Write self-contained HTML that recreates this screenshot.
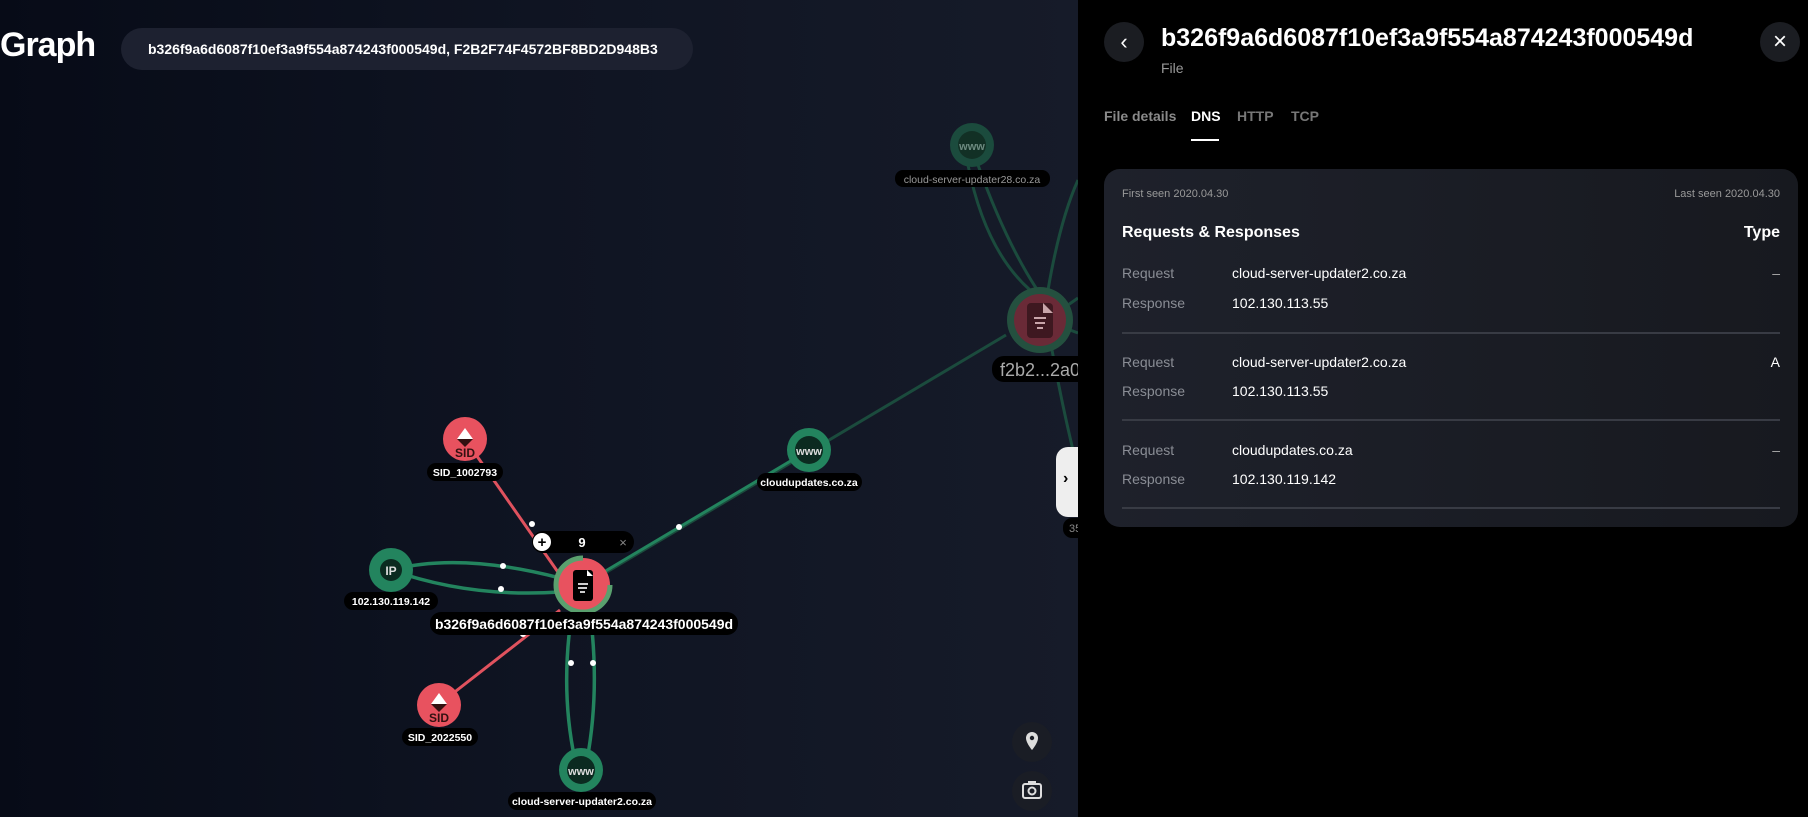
<!DOCTYPE html>
<html><head><meta charset="utf-8"><style>
*{margin:0;padding:0;box-sizing:border-box}
body{width:1808px;height:817px;overflow:hidden;font-family:"Liberation Sans",sans-serif;background:#000;position:relative}
#g{position:absolute;left:0;top:0;width:1078px;height:817px;background:linear-gradient(90deg,#070b17 0%,#0f1422 50%,#161b29 100%)}
.t{position:absolute;color:#fff}
#panel{position:absolute;left:1078px;top:0;width:730px;height:817px;background:#000}
.circ{position:absolute;width:40px;height:40px;border-radius:50%;background:#1b1d22;color:#fff;display:flex;align-items:center;justify-content:center}
.card{position:absolute;left:26px;top:169px;width:694px;height:358px;border-radius:16px;background:linear-gradient(90deg,#1e212b,#17191f)}
.row{position:absolute;font-size:14px}
.lab{position:absolute;left:18px;color:#8a8d95}
.val{position:absolute;left:128px;color:#fff}
.typ{position:absolute;right:18px;color:#aaa}
.div{position:absolute;left:18px;right:18px;height:2px;background:#383b44}
</style></head><body>
<div id="g">
<svg width="1078" height="817" style="position:absolute;left:0;top:0" font-family="Liberation Sans, sans-serif">
<g stroke="#1b4b3d" stroke-width="3" fill="none">
<path d="M978 165 Q1005 240 1036 288"/>
<path d="M968 165 Q985 250 1030 290"/>
<path d="M1048 290 Q1060 220 1078 180"/>
<path d="M1068 305 L1078 298"/>
<path d="M1070 330 L1078 333"/>
<path d="M1052 350 Q1065 420 1078 470"/>
<path d="M1006 335 L590 582"/>
</g>
<path d="M582 585 L809 450" stroke="#23845e" stroke-width="3"/>
<path d="M465 439 L560 575" stroke="#e0525e" stroke-width="3"/>
<path d="M438 705 L560 610" stroke="#e0525e" stroke-width="3"/>
<g stroke="#23845e" stroke-width="3.5" fill="none">
<path d="M391 570 Q460 552 560 578"/>
<path d="M391 570 Q470 598 560 592"/>
<path d="M572 612 Q560 690 575 760"/>
<path d="M590 612 Q600 690 587 760"/>
</g>
<g fill="#fff"><circle cx="532" cy="524" r="3"/><circle cx="503" cy="566" r="3"/><circle cx="501" cy="589" r="3"/><circle cx="679" cy="527" r="3"/><circle cx="571" cy="663" r="3"/><circle cx="593" cy="663" r="3"/><circle cx="523" cy="634" r="3"/></g>
<circle cx="972" cy="145" r="22" fill="#1b4b3d"/><circle cx="972" cy="145" r="14" fill="#123025"/>
<text x="972" y="150" fill="#6d8a80" font-size="11" font-weight="bold" text-anchor="middle">www</text>
<rect x="895" y="170" width="155" height="17" rx="8" fill="#000"/>
<text x="972" y="183" fill="#999" font-size="10.5" text-anchor="middle">cloud-server-updater28.co.za</text>
<circle cx="1040" cy="320" r="33" fill="#24503f"/><circle cx="1040" cy="320" r="26" fill="#6a2a37"/>
<rect x="1027" y="303" width="26" height="35" rx="4" fill="#3e1820"/><path d="M1043 303 L1053 313 L1043 313Z" fill="#c9a5aa"/>
<g stroke="#c9a5aa" stroke-width="2"><line x1="1034" y1="318" x2="1046" y2="318"/><line x1="1035" y1="323" x2="1045" y2="323"/><line x1="1037" y1="328" x2="1043" y2="328"/></g>
<rect x="992" y="356" width="100" height="26" rx="12" fill="#000"/>
<text x="1000" y="376" fill="#aaa" font-size="18">f2b2...2a0f</text>
<rect x="1063" y="518" width="30" height="20" rx="9" fill="#000"/><text x="1069" y="532" fill="#888" font-size="11">35</text>
<circle cx="809" cy="450" r="22" fill="#23845e"/><circle cx="809" cy="450" r="14" fill="#0b2a20"/>
<text x="809" y="455" fill="#ddd" font-size="11" font-weight="bold" text-anchor="middle">www</text>
<rect x="757" y="473" width="105" height="18" rx="9" fill="#000"/>
<text x="809" y="486" fill="#fff" font-size="10.5" font-weight="bold" text-anchor="middle">cloudupdates.co.za</text>
<circle cx="465" cy="439" r="22" fill="#e8525f"/>
<path d="M465 428 L473 439 L457 439Z" fill="#fff"/><path d="M457 439 L473 439 L465 447Z" fill="#311"/>
<text x="465" y="457" fill="#311" font-size="12" font-weight="bold" text-anchor="middle">SID</text>
<rect x="427" y="463" width="76" height="18" rx="9" fill="#000"/>
<text x="465" y="476" fill="#fff" font-size="10.5" font-weight="bold" text-anchor="middle">SID_1002793</text>
<circle cx="391" cy="570" r="22" fill="#23845e"/><circle cx="391" cy="570" r="11" fill="#0b2a20"/>
<text x="391" y="575" fill="#ddd" font-size="12" font-weight="bold" text-anchor="middle">IP</text>
<rect x="344" y="592" width="94" height="18" rx="9" fill="#000"/>
<text x="391" y="605" fill="#fff" font-size="10.5" font-weight="bold" text-anchor="middle">102.130.119.142</text>
<circle cx="583" cy="585" r="27" fill="#e8525f"/>
<path d="M583 558 A27 27 0 0 1 610 585 A27 27 0 1 1 556 585" fill="none" stroke="#5aa06e" stroke-width="5" transform="rotate(90 583 585)"/>
<circle cx="583" cy="585" r="22" fill="#e8525f"/>
<rect x="573" y="570" width="20" height="31" rx="3" fill="#000"/><path d="M587 570 L593 576 L587 576Z" fill="#fff"/>
<g stroke="#fff" stroke-width="1.6"><line x1="578" y1="584" x2="588" y2="584"/><line x1="578" y1="588" x2="587" y2="588"/><line x1="580" y1="592" x2="585" y2="592"/></g>
<rect x="430" y="612" width="308" height="23" rx="11" fill="#000"/>
<text x="584" y="629" fill="#fff" font-size="14" font-weight="bold" text-anchor="middle">b326f9a6d6087f10ef3a9f554a874243f000549d</text>
<rect x="532" y="531" width="102" height="22" rx="11" fill="#000"/>
<circle cx="542" cy="542" r="9" fill="#fff"/><text x="542" y="547" font-size="15" font-weight="bold" text-anchor="middle" fill="#000">+</text>
<text x="582" y="547" fill="#fff" font-size="13" font-weight="bold" text-anchor="middle">9</text>
<text x="623" y="547" fill="#888" font-size="13" text-anchor="middle">×</text>
<circle cx="439" cy="705" r="22" fill="#e8525f"/>
<path d="M439 693 L447 704 L431 704Z" fill="#fff"/><path d="M431 704 L447 704 L439 712Z" fill="#311"/>
<text x="439" y="722" fill="#311" font-size="12" font-weight="bold" text-anchor="middle">SID</text>
<rect x="402" y="728" width="76" height="18" rx="9" fill="#000"/>
<text x="440" y="741" fill="#fff" font-size="10.5" font-weight="bold" text-anchor="middle">SID_2022550</text>
<circle cx="581" cy="770" r="22" fill="#23845e"/><circle cx="581" cy="770" r="14" fill="#0b2a20"/>
<text x="581" y="775" fill="#ddd" font-size="11" font-weight="bold" text-anchor="middle">www</text>
<rect x="508" y="792" width="148" height="18" rx="9" fill="#000"/>
<text x="582" y="805" fill="#fff" font-size="10.5" font-weight="bold" text-anchor="middle">cloud-server-updater2.co.za</text>
<circle cx="1032" cy="742" r="20" fill="#1a1d25"/>
<path d="M1032 732 a6 6 0 0 1 6 6 c0 5 -6 12 -6 12 c0 0 -6 -7 -6 -12 a6 6 0 0 1 6 -6z" fill="#ddd"/><circle cx="1032" cy="738" r="2.2" fill="#1a1d25"/>
<circle cx="1032" cy="791" r="20" fill="#1a1d25"/>
<rect x="1023" y="784" width="18" height="14" rx="2" fill="none" stroke="#ddd" stroke-width="2"/><rect x="1028" y="781" width="8" height="4" fill="#ddd"/><circle cx="1032" cy="791" r="3.5" fill="none" stroke="#ddd" stroke-width="2"/>
</svg>
<div class="t" style="left:0;top:26px;font-size:34px;font-weight:bold;letter-spacing:-1px">Graph</div>
<div style="position:absolute;left:121px;top:28px;width:572px;height:42px;border-radius:21px;background:#1d2130"></div>
<div class="t" style="left:148px;top:41px;font-size:14px;font-weight:bold">b326f9a6d6087f10ef3a9f554a874243f000549d, F2B2F74F4572BF8BD2D948B3</div>
<div style="position:absolute;left:1056px;top:447px;width:30px;height:70px;border-radius:12px 0 0 12px;background:#eee;"></div>
<div style="position:absolute;left:1063px;top:470px;font-size:16px;color:#000;font-weight:bold">›</div>
</div>
<div id="panel">
<div class="circ" style="left:26px;top:22px;font-size:22px">‹</div>
<div class="t" style="left:83px;top:24px;font-size:25px;font-weight:bold">b326f9a6d6087f10ef3a9f554a874243f000549d</div>
<div class="t" style="left:83px;top:60px;font-size:14px;color:#999">File</div>
<div class="circ" style="left:682px;top:22px;font-size:24px">×</div>
<div style="position:absolute;left:26px;top:108px;font-size:14px;font-weight:bold;color:#8a8a8a">File details</div>
<div style="position:absolute;left:113px;top:108px;font-size:14px;font-weight:bold;color:#fff">DNS</div>
<div style="position:absolute;left:113px;top:139px;width:28px;height:2px;background:#fff"></div>
<div style="position:absolute;left:159px;top:108px;font-size:14px;font-weight:bold;color:#777">HTTP</div>
<div style="position:absolute;left:213px;top:108px;font-size:14px;font-weight:bold;color:#777">TCP</div>
<div class="card">
<div style="position:absolute;left:18px;top:19px;font-size:11px;color:#999">First seen 2020.04.30</div>
<div style="position:absolute;right:18px;top:19px;font-size:11px;color:#999">Last seen 2020.04.30</div>
<div style="position:absolute;left:18px;top:55px;font-size:16px;font-weight:bold;color:#fff">Requests &amp; Responses</div>
<div style="position:absolute;right:18px;top:55px;font-size:16px;font-weight:bold;color:#fff">Type</div>
<div class="row" style="top:96px;width:100%"><span class="lab">Request</span><span class="val">cloud-server-updater2.co.za</span><span class="typ">–</span></div>
<div class="row" style="top:126px;width:100%"><span class="lab">Response</span><span class="val">102.130.113.55</span></div>
<div class="div" style="top:163px"></div>
<div class="row" style="top:185px;width:100%"><span class="lab">Request</span><span class="val">cloud-server-updater2.co.za</span><span class="typ" style="color:#fff">A</span></div>
<div class="row" style="top:214px;width:100%"><span class="lab">Response</span><span class="val">102.130.113.55</span></div>
<div class="div" style="top:250px"></div>
<div class="row" style="top:273px;width:100%"><span class="lab">Request</span><span class="val">cloudupdates.co.za</span><span class="typ">–</span></div>
<div class="row" style="top:302px;width:100%"><span class="lab">Response</span><span class="val">102.130.119.142</span></div>
<div class="div" style="top:338px"></div>
</div>
</div>
</body></html>
